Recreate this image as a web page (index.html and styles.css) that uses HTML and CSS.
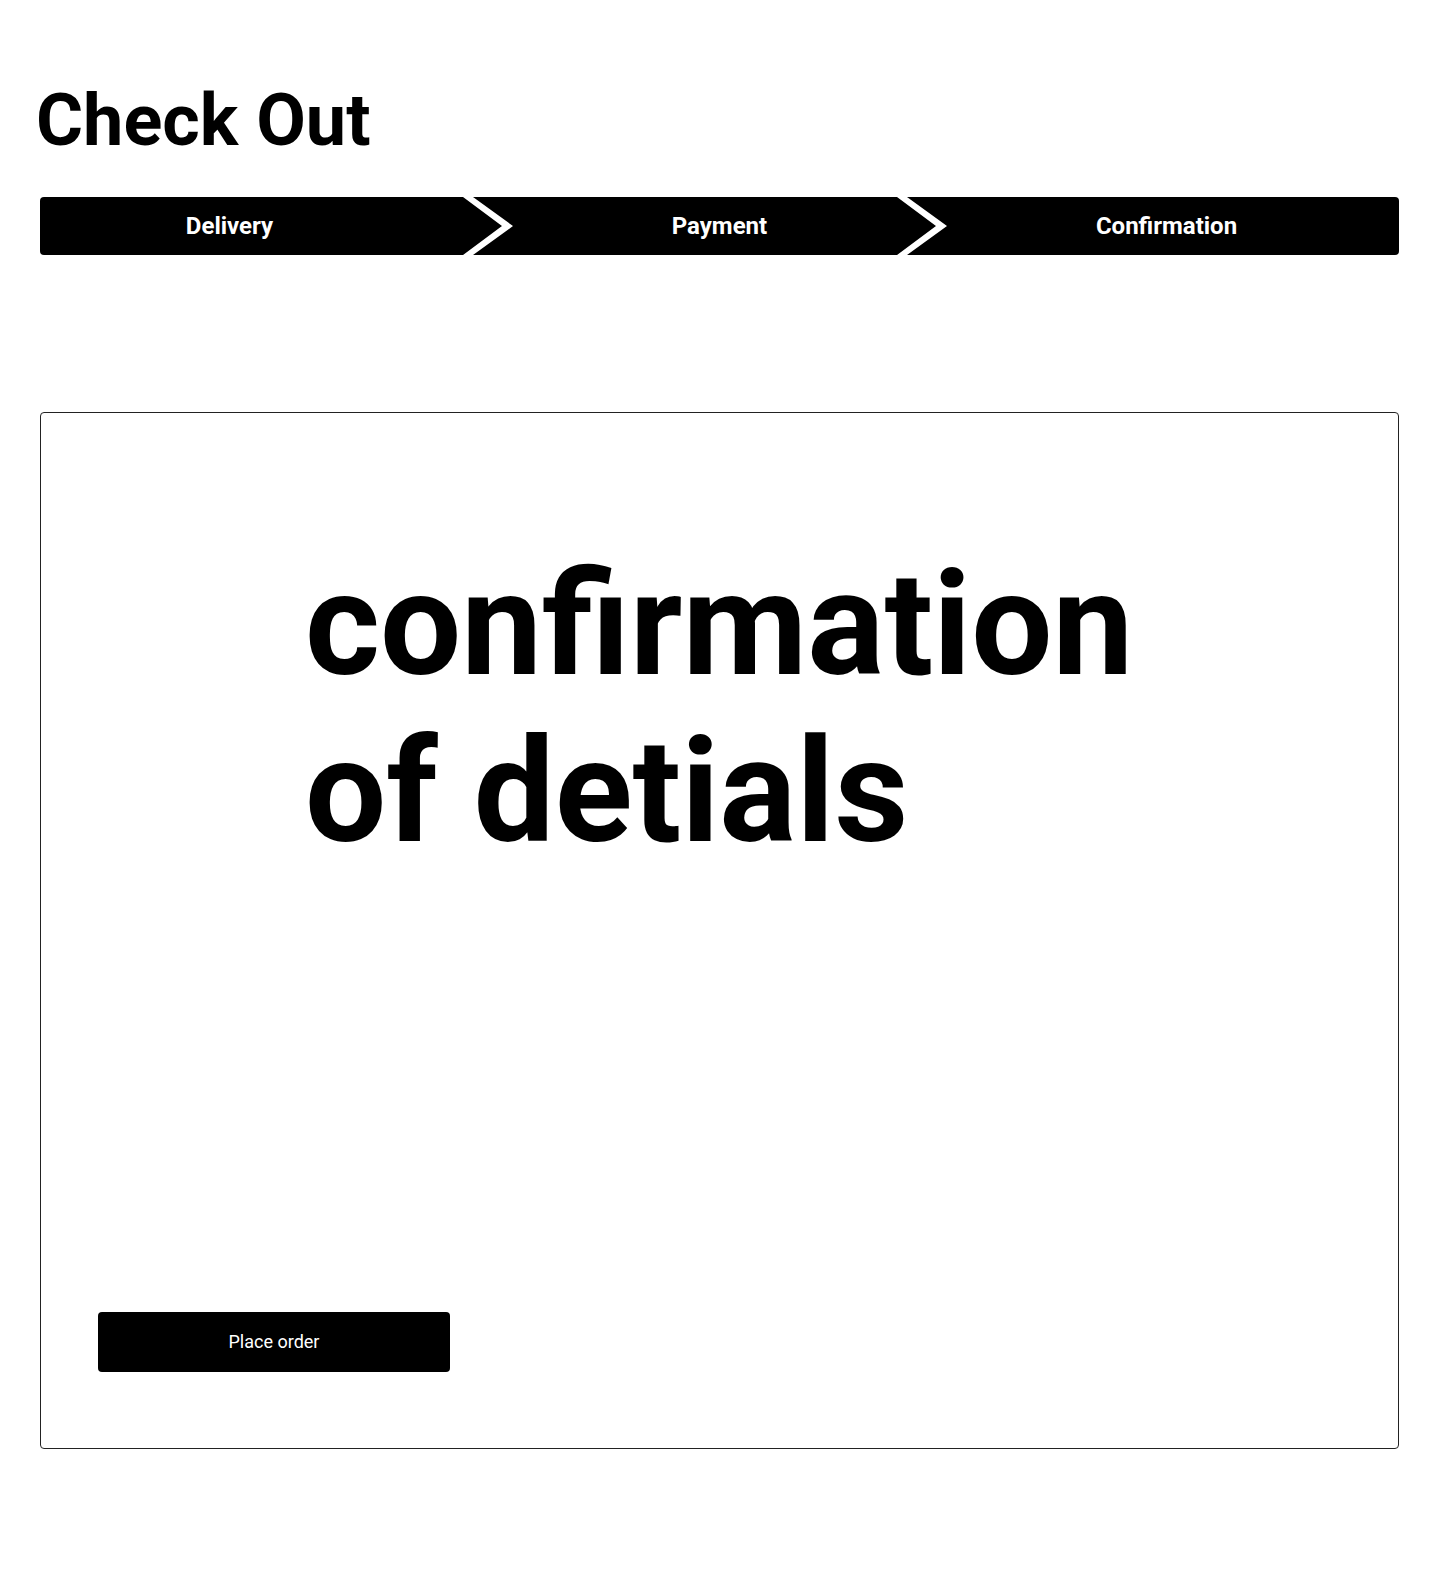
FILE: index.html
```html
<!DOCTYPE html>
<html lang="en">
<head>
<meta charset="utf-8">
<title>Check Out</title>
<link rel="stylesheet" href="styles.css">
</head>
<body>
<main class="page">
  <h1 class="title">Check Out</h1>
  <nav class="stepper">
    <div class="step step-delivery">Delivery</div>
    <svg class="sep" width="50" height="58" viewBox="0 0 50 58"><polygon points="0,0 10,0 50,29 10,58 0,58 39,29" fill="#fff"/></svg>
    <div class="step step-payment">Payment</div>
    <svg class="sep" width="50" height="58" viewBox="0 0 50 58"><polygon points="0,0 10,0 50,29 10,58 0,58 39,29" fill="#fff"/></svg>
    <div class="step step-confirm">Confirmation</div>
  </nav>
  <section class="card">
    <p class="headline">confirmation<br>of detials</p>
    <button class="place-order" type="button">Place order</button>
  </section>
</main>
</body>
</html>
```
FILE: styles.css
```css
html, body {
  margin: 0;
  padding: 0;
  background: #fff;
}
body {
  font-family: Roboto, "Noto Sans", sans-serif;
  color: #000;
}
.page {
  padding: 85px 41px 0 40px;
}
.title {
  margin: 0;
  font-size: 72px;
  line-height: 1;
  font-weight: 700;
  margin-left: -4px;
}
.stepper {
  margin-top: 40px;
  height: 58px;
  display: flex;
  align-items: center;
  background: #000;
  border-radius: 4px;
  color: #fff;
  font-size: 24px;
  font-weight: 700;
}
.step {
  height: 100%;
  display: flex;
  align-items: center;
  justify-content: center;
  box-sizing: border-box;
}
.step-delivery {
  width: 423px;
  padding-right: 44px;
}
.step-payment {
  width: 384px;
  padding-left: 29px;
}
.step-confirm {
  flex: 1;
  padding-right: 13px;
}
.sep {
  flex: none;
  display: block;
}
.card {
  margin-top: 157px;
  height: 1037px;
  box-sizing: border-box;
  border: 1px solid #222;
  border-radius: 4px;
  display: flex;
  flex-direction: column;
  align-items: flex-start;
  padding: 128px 0 76px 0;
}
.headline {
  margin: 0 0 0 264px;
  font-size: 144px;
  line-height: 167px;
  font-weight: 700;
}
.place-order {
  margin-top: auto;
  margin-left: 57px;
  width: 352px;
  height: 60px;
  background: #000;
  color: #fff;
  border: none;
  border-radius: 4px;
  font-family: Roboto, "Noto Sans", sans-serif;
  font-size: 18px;
  font-weight: 400;
  padding: 0 0 2px 0;
}
```
